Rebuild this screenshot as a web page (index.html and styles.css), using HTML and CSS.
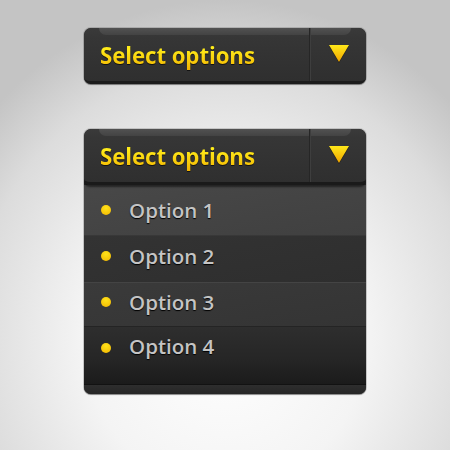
FILE: index.html
```html
<!DOCTYPE html>
<html>
<head>
<meta charset="utf-8">
<link rel="stylesheet" href="styles.css">
</head>
<body>
<div class="stage">
  <div class="select closed">
    <div class="head">
      <div class="label"><span class="txt">Select options</span></div>
      <div class="arrow"><svg width="20" height="17" viewBox="0 0 20 17"><defs><linearGradient id="g1" x1="0" y1="0" x2="0" y2="1"><stop offset="0" stop-color="#ffe81a"/><stop offset="1" stop-color="#f0a400"/></linearGradient></defs><path d="M0 0H20L10 17Z" fill="url(#g1)"/></svg></div>
    </div>
  </div>
  <div class="select open">
    <div class="head">
      <div class="label"><span class="txt">Select options</span></div>
      <div class="arrow"><svg width="20" height="17" viewBox="0 0 20 17"><defs><linearGradient id="g2" x1="0" y1="0" x2="0" y2="1"><stop offset="0" stop-color="#ffe81a"/><stop offset="1" stop-color="#f0a400"/></linearGradient></defs><path d="M0 0H20L10 17Z" fill="url(#g2)"/></svg></div>
    </div>
    <ul class="list">
      <li class="row r1"><span class="dot"></span>Option 1</li>
      <li class="row r2"><span class="dot"></span>Option 2</li>
      <li class="row r3"><span class="dot"></span>Option 3</li>
      <li class="row r4"><span class="dot"></span>Option 4</li>
    </ul>
    <div class="foot"></div>
  </div>
</div>
</body>
</html>
```
FILE: styles.css
```css
html, body { margin: 0; padding: 0; }
body {
  width: 450px; height: 450px; overflow: hidden;
  background: radial-gradient(ellipse 70% 75% at 50% 75%, #ffffff 0%, #f4f4f4 45%, #dcdcdc 80%, #c4c4c4 100%);
  font-family: "Open Sans", "DejaVu Sans", sans-serif;
}
.stage {
  padding: 28px 0 0 84px;
  display: flex; flex-direction: column; gap: 45px;
}
.select {
  width: 282px;
  border-radius: 7px;
  background: #262626;
  box-shadow: 0 1px 1px rgba(0,0,0,0.35), 0 0 0 1px rgba(0,0,0,0.15);
  overflow: hidden;
}
.head {
  height: 53px;
  display: flex;
  background: linear-gradient(#3a3a3a 0px, #363636 9px, #2f2f2f 100%);
  border-bottom: 3px solid #1c1c1c;
  border-radius: 7px 7px 6px 6px;
  position: relative;
}
.open .head { box-shadow: 0 2px 2px rgba(0,0,0,0.5); border-bottom-color: #1a1a1a; }
.head::before {
  content: ""; position: absolute; left: 15px; right: 15px; top: 0; height: 7px;
  background: linear-gradient(#575757, #464646);
  border-radius: 0 0 7px 7px;
  opacity: 0.8;
}
.label {
  width: 226px;
  display: flex; align-items: center;
  padding-left: 16px; box-sizing: border-box;
  border-right: 1px solid #262626;
  position: relative;
}
.txt {
  font-weight: 700; font-size: 22.3px; letter-spacing: -0.1px;
  background: linear-gradient(#ffec1a 30%, #f2b000 100%);
  -webkit-background-clip: text; background-clip: text;
  color: transparent;
  filter: drop-shadow(0 1px 0 rgba(0,0,0,0.6));
  padding-top: 1px;
}
.arrow {
  flex: 1;
  display: flex; align-items: center; justify-content: center;
  border-left: 1px solid #3e3e3e;
  padding-bottom: 2px;
  position: relative;
}
.arrow svg { filter: drop-shadow(0 1px 0 rgba(0,0,0,0.5)); }
.list {
  list-style: none; margin: 0; padding: 0;
  background: #1a1a1a;
}
.row {
  display: flex; align-items: center;
  padding-left: 17px; box-sizing: border-box;
  font-size: 20.5px; font-weight: 600;
  color: #c4c4c4;
  text-shadow: 0 1px 1px #000;
}
.r1 { height: 50px; padding-bottom: 0; background: linear-gradient(170deg, #484848, #404040); }
.r2 { height: 47px; padding-bottom: 6px; background: linear-gradient(170deg, #333333, #2e2e2e); border-top: 1px solid #383838; }
.r3 { height: 44px; padding-bottom: 5px; background: linear-gradient(170deg, #3a3a3a, #343434); border-top: 1px solid #444; }
.r4 { height: 58px; align-items: flex-start; padding-top: 5px; background: linear-gradient(#2e2e2e, #262626 55%, #1b1b1b); border-top: 1px solid #242424; }
.dot {
  width: 10px; height: 10px; border-radius: 50%;
  background: radial-gradient(circle at 50% 30%, #ffe21a, #f2b600);
  margin-right: 18px;
}
.r4 .dot { margin-top: 11px; }
.foot {
  height: 9px;
  background: linear-gradient(#2e2e2e, #262626);
  border-top: 1px solid #121212;
}
```
